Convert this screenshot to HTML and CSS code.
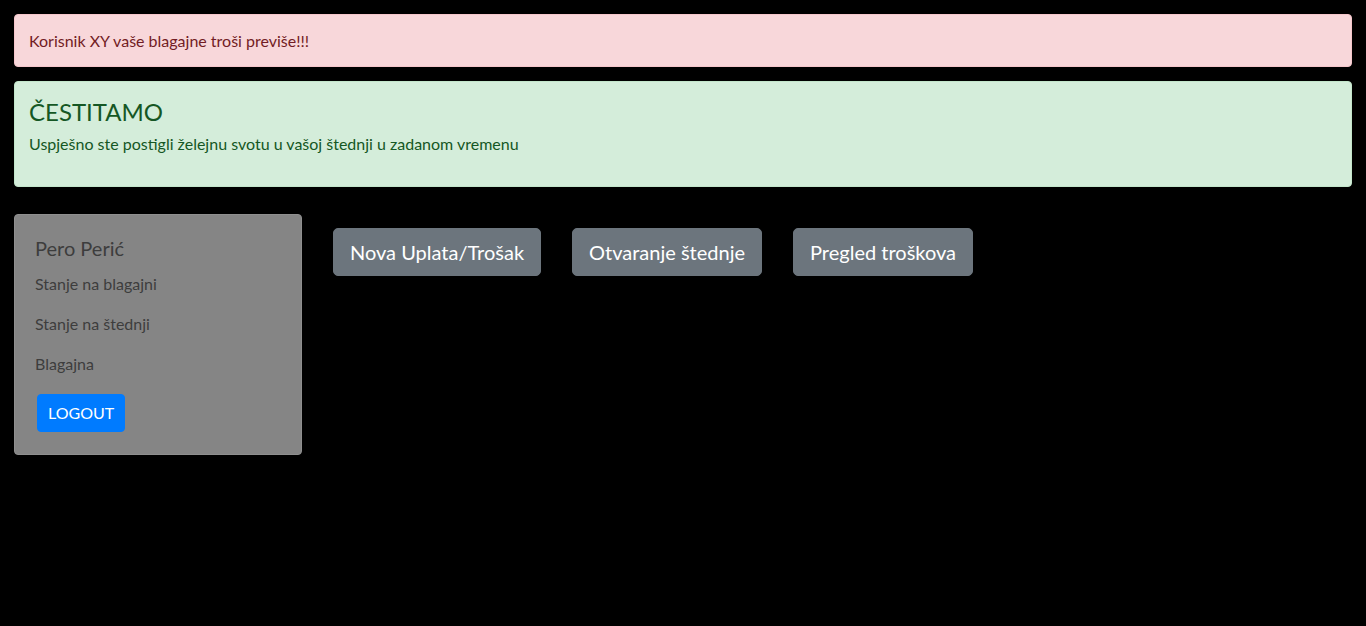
FILE: index.html
```html
<!DOCTYPE html>
<html lang="hr">
<head>
<meta charset="utf-8">
<title>Blagajna</title>
<link rel="stylesheet" href="styles.css">
</head>
<body>
<div class="page">
  <div class="alert alert-danger">Korisnik XY vaše blagajne troši previše!!!</div>
  <div class="alert alert-success">
    <h4 class="alert-heading">ČESTITAMO</h4>
    <p class="alert-text">Uspješno ste postigli želejnu svotu u vašoj štednji u zadanom vremenu</p>
  </div>
  <div class="main">
    <aside class="sidebar">
      <h5 class="user-name">Pero Perić</h5>
      <p class="side-item">Stanje na blagajni</p>
      <p class="side-item">Stanje na štednji</p>
      <p class="side-item side-item-last">Blagajna</p>
      <button class="btn-logout">LOGOUT</button>
    </aside>
    <div class="actions">
      <button class="btn-action">Nova Uplata/Trošak</button>
      <button class="btn-action">Otvaranje štednje</button>
      <button class="btn-action">Pregled troškova</button>
    </div>
  </div>
</div>
</body>
</html>
```

FILE: styles.css
```css
html, body {
  margin: 0;
  padding: 0;
  background: #000;
}
body {
  font-family: "Lato", "Open Sans", sans-serif;
  font-size: 16px;
  line-height: 24px;
}
.page {
  padding: 14px;
}
.alert {
  border: 1px solid;
  border-radius: 4px;
  padding: 14px 14px 13px;
  margin-bottom: 14px;
}
.alert-danger {
  background: #f8d7da;
  border-color: #f5c6cb;
  color: #721c24;
}
.alert-success {
  background: #d4edda;
  border-color: #c3e6cb;
  color: #155724;
  padding-top: 16px;
  padding-bottom: 14px;
}
.alert-heading {
  margin: 0 0 6px;
  font-size: 24px;
  font-weight: 400;
  line-height: 28px;
}
.alert-text {
  margin: 0 0 16px;
}
.main {
  display: flex;
  align-items: flex-start;
  gap: 31px;
  margin-top: 27px;
}
.sidebar {
  width: 246px;
  background: #858585;
  border: 1px solid #8f8f8f;
  border-radius: 4px;
  padding: 21px 20px 22px;
  color: #3d3d3d;
}
.user-name {
  margin: 0 0 12px;
  font-size: 20px;
  font-weight: 400;
  line-height: 24px;
}
.side-item {
  margin: 0 0 16px;
}
.side-item-last {
  margin-bottom: 18px;
}
.btn-logout {
  margin: 0 0 0 2px;
  background: #007bff;
  color: #fff;
  border: 1px solid #007bff;
  border-radius: 4px;
  padding: 6px 10px;
  font: inherit;
  line-height: 24px;
  display: block;
}
.actions {
  display: flex;
  gap: 31px;
  margin-top: 14px;
}
.btn-action {
  background: #6c757d;
  color: #fff;
  border: 1px solid #6c757d;
  border-radius: 5px;
  padding: 8px 16px;
  font-family: inherit;
  font-size: 20px;
  line-height: 30px;
}
```
